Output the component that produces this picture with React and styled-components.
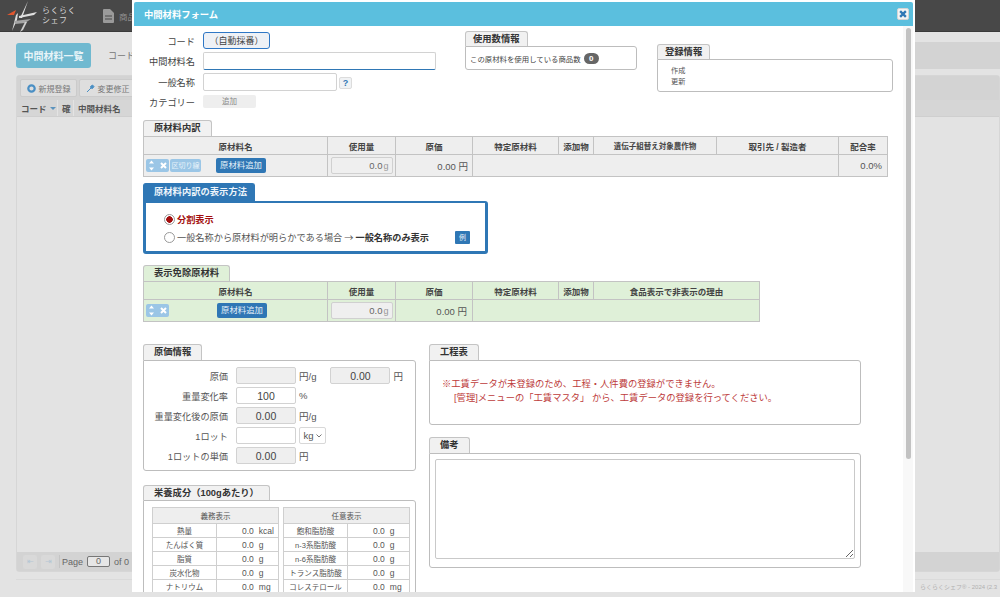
import React from 'react'
import styled, { createGlobalStyle } from 'styled-components'

const GlobalStyle = createGlobalStyle`
  html, body {
    margin: 0;
    padding: 0;
    height: 100%;
    overflow: hidden;
    background: #e3e3e3;
  }

  * {
    box-sizing: border-box;
  }

  body {
    font-family: "Liberation Sans", "Noto Sans CJK JP", sans-serif;
    color: #333;
  }
`

const Page = styled.div`
  width: 1000px;
  height: 597px;
  position: relative;
  overflow: hidden;
`

/* dimmed page behind the modal */
const Header = styled.header`
  height: 32px;
  background: #484848;
  border-bottom: 1px solid #3a3a3a;
  display: flex;
  align-items: center;
  padding-left: 7px;
`

const LogoText = styled.div`
  color: #d6d6d6;
  font-size: 8px;
  line-height: 9.500px;
  margin-left: 3px;
  letter-spacing: 0.5px;
`

const NavItem = styled.div`
  display: flex;
  align-items: center;
  gap: 5px;
  color: #8f8f8f;
  font-size: 8.5px;
  margin-left: 27px;
`

const TitleRow = styled.div`
  display: flex;
  align-items: stretch;
  height: 27px;
  margin: 10px 0 0 16px;
`

const ListTitle = styled.div`
  width: 75px;
  margin: 1px 0;
  background: #70b9d0;
  border-radius: 3px;
  color: #e8f4f8;
  font-size: 10px;
  font-weight: bold;
  display: flex;
  align-items: center;
  justify-content: center;
`

const SearchLabel = styled.div`
  color: #777;
  font-size: 9px;
  margin-left: 17px;
  display: flex;
  align-items: center;
`

const SearchBand = styled.div`
  flex: 1;
  margin-left: 30px;
  background: #d3d3d3;
`

const ListPanel = styled.div`
  margin: 6px 0 0 16px;
  height: 497px;
  background: #e3e3e3;
  border: 1px solid #d6d6d6;
  border-radius: 3px;
  display: flex;
  flex-direction: column;
`

const ListToolbar = styled.div`
  height: 24px;
  background: #d3d3d3;
  display: flex;
  align-items: center;
  gap: 2px;
  padding-left: 3px;
`

const ToolButton = styled.div`
  width: 57px;
  height: 18px;
  flex: none;
  border: 1px solid #cbcbcb;
  border-radius: 2px;
  background: #dedede;
  color: #777;
  font-size: 8px;
  display: flex;
  align-items: center;
  justify-content: center;
  gap: 3px;
`

const ListHead = styled.div`
  height: 17px;
  display: flex;
  background: #d6d6d6;
  border-bottom: 1px solid #cfcfcf;
  font-size: 8.5px;
  font-weight: bold;
  color: #555;
`

const ListHeadCell = styled.div`
  width: ${p => p.$w}px;
  flex: none;
  display: flex;
  align-items: center;
  padding-left: 4px;
  gap: 3px;
  border-right: 1px solid #e3e3e3;
`

const SortCaret = styled.span`
  width: 0;
  height: 0;
  border-left: 3px solid transparent;
  border-right: 3px solid transparent;
  border-top: 3px solid #5c93bd;
`

const Pager = styled.div`
  margin-top: auto;
  height: 19px;
  background: #d3d3d3;
  display: flex;
  align-items: center;
  padding-left: 6px;
  gap: 4px;
  color: #666;
  font-size: 9px;
`

const PagerArrow = styled.div`
  width: 14px;
  height: 14px;
  border-radius: 2px;
  background: #d9d9d9;
  color: #b4c6d4;
  font-size: 8px;
  display: flex;
  align-items: center;
  justify-content: center;
`

const PagerDivider = styled.div`
  width: 1px;
  height: 13px;
  margin-right: -2px;
  background: #c4c4c4;
`

const PagerInput = styled.div`
  width: 23px;
  height: 11px;
  border: 1px solid #777;
  border-radius: 2px;
  background: #e6e6e6;
  text-align: center;
  line-height: 9px;
`

const FooterRule = styled.div`
  height: 1px;
  margin: 7px 0 0 16px;
  background: #dadada;
`

const FooterText = styled.div`
  position: absolute;
  left: 920px;
  top: 582px;
  font-size: 6px;
  color: #b0b0b0;
  white-space: nowrap;
`

/* modal */
const Modal = styled.div`
  position: absolute;
  left: 132px;
  top: 0;
  width: 783px;
  height: 592px;
  background: #fff;
  padding: 2px 2px 0;
  display: flex;
  flex-direction: column;
`

const ModalTitle = styled.div`
  height: 24px;
  flex: none;
  background: #5bbfde;
  border-radius: 2px 2px 0 0;
  color: #fff;
  font-size: 9.300px;
  font-weight: bold;
  display: flex;
  align-items: center;
  justify-content: space-between;
  padding: 0 4px 0 10px;
`

const CloseButton = styled.div`
  width: 12px;
  height: 12px;
  background: #f4f4f4;
  border: 1px solid #d5d5d5;
  border-radius: 2px;
  display: flex;
  align-items: center;
  justify-content: center;
`

const ModalBody = styled.div`
  flex: 1;
  min-height: 0;
  overflow: hidden;
  font-size: 10px;
`

const ScrollTrack = styled.div`
  position: absolute;
  top: 26px;
  right: 2px;
  bottom: 0;
  width: 10px;
  background: #f8f8f8;
`

const ScrollThumb = styled.div`
  width: 5px;
  height: 431px;
  margin: 2px 0 0 3px;
  background: #c2c2c2;
  border-radius: 3px;
`

const Content = styled.div`
  padding: 6px 0 0 9px;
`

const TopRow = styled.div`
  display: flex;
  align-items: flex-start;
  height: 88px;
`

const CodeForm = styled.div`
  width: 293px;
  display: grid;
  grid-template-columns: 52px 1fr;
  column-gap: 8px;
  row-gap: 3px;
  align-items: center;
  margin-right: 29px;
`

const FormLabel = styled.div`
  font-size: 9.200px;
  color: #444;
  text-align: right;
  white-space: nowrap;
`

const CodeBox = styled.div`
  width: 67px;
  height: 17px;
  border: 1px solid #2f77c5;
  border-radius: 3px;
  background: #eef1f6;
  font-size: 9px;
  color: #444;
  display: flex;
  align-items: center;
  justify-content: center;
`

const TextInput = styled.input`
  display: block;
  width: ${p => p.$w}px;
  height: ${p => p.$h || 18}px;
  padding: 0 5px;
  border: 1px solid #d2d2d2;
  border-bottom-color: ${p => (p.$focus ? '#2f77b5' : '#d2d2d2')};
  border-radius: 2px;
  background: ${p => (p.disabled ? '#efefef' : '#fff')};
  font: 10.500px "Liberation Sans", sans-serif;
  color: #444;
  text-align: center;
  outline: none;
`

const InlineRow = styled.div`
  display: flex;
  align-items: center;
  gap: 2px;
`

const HelpButton = styled.div`
  width: 13px;
  height: 12px;
  margin-top: 2px;
  background: #f0f2f4;
  border: 1px solid #dcdcdc;
  border-radius: 2px;
  color: #2f77b5;
  font-size: 9px;
  font-weight: bold;
  text-align: center;
  line-height: 10px;
`

const AddChip = styled.div`
  width: 53px;
  height: 13px;
  margin: 1px 0;
  background: #eee;
  border-radius: 2px;
  color: #888;
  font-size: 7.500px;
  text-align: center;
  line-height: 13px;
`

const Section = styled.section`
  width: ${p => p.$w}px;
  margin: ${p => p.$m || 0};
`

const SectionTab = styled.div`
  width: fit-content;
  height: ${p => p.$h || 16}px;
  padding: 0 ${p => p.$px || 10}px;
  background: ${p => p.$bg || '#f1f1f1'};
  color: ${p => p.$color || '#333'};
  border: 1px solid ${p => p.$border || '#c4c4c4'};
  border-bottom: none;
  border-radius: 3px 3px 0 0;
  font-size: 9.300px;
  font-weight: bold;
  line-height: ${p => (p.$h || 16) - 1}px;
  white-space: nowrap;
`

const SectionBox = styled.div`
  height: ${p => p.$h}px;
  background: #fff;
  border: 1px solid #bdbdbd;
  border-radius: 0 3px 3px 3px;
`

const UsageBox = styled(SectionBox)`
  font-size: 7.400px;
  display: flex;
  align-items: center;
  gap: 3px;
  padding-left: 4px;
  color: #444;
`

const CountBadge = styled.span`
  width: 15px;
  height: 11px;
  border-radius: 6px;
  background: #666;
  color: #fff;
  font-size: 8px;
  font-weight: bold;
  text-align: center;
  line-height: 11px;
`

const RegLine = styled.div`
  font-size: 7.200px;
  line-height: 11px;
  color: #555;
  padding-left: 13px;

  &:first-child {
    padding-top: 5px;
  }
`

const DataTable = styled.table`
  table-layout: fixed;
  border-collapse: collapse;
  width: ${p => p.$w}px;
  background: ${p => p.$bg};
  font-size: 9.500px;
  color: #444;

  th, td {
    border: 1px solid #c3c3c3;
    padding: 0;
  }

  th {
    height: 18px;
    font-size: 8.500px;
    font-weight: bold;
    color: #444;
    text-align: center;
  }

  td {
    height: 22px;
  }
`

const SmallTh = styled.th`
  && {
    font-size: 7.500px;
  }
`

const ActionCell = styled.div`
  display: flex;
  align-items: center;
  padding: 0 2px;
`

const MoveGroup = styled.div`
  height: 13px;
  width: 23px;
  background: #9bc6e6;
  border-radius: 2px;
  display: flex;
  align-items: center;
  justify-content: space-around;
`

const DividerChip = styled.div`
  height: 13px;
  width: 31px;
  margin-left: 1px;
  background: #9bc6e6;
  border-radius: 2px;
  color: #e8f3fa;
  font-size: 7px;
  text-align: center;
  line-height: 13px;
`

const AddButton = styled.div`
  width: 50px;
  height: 15px;
  margin-left: ${p => p.$ml}px;
  background: #2f77b5;
  border-radius: 2px;
  color: #e4eff8;
  font-size: 8.400px;
  text-align: center;
  line-height: 15px;
`

const QtyCell = styled.div`
  display: flex;
  justify-content: center;
`

const QtyBox = styled.div`
  width: 62px;
  height: 17px;
  background: #efefef;
  border: 1px solid #d0d0d0;
  border-radius: 2px;
  font-size: 9.500px;
  color: #666;
  display: flex;
  align-items: center;
  justify-content: flex-end;
  padding-right: 3px;
  gap: 1px;
`

const UnitGlyph = styled.span`
  color: #999;
  font-size: 9px;
`

const NumCell = styled.td`
  && {
    text-align: right;
    padding-right: ${p => p.$pr || 4}px;
    color: #555;
  }
`

const MethodTab = styled(SectionTab)`
  width: 112px;
  padding: 0 0 0 10px;
`

const MethodBox = styled.div`
  width: 345px;
  height: 53px;
  border: 3px solid #2f77b5;
  border-top-width: 2px;
  border-radius: 0 3px 3px 3px;
  padding: 7px 0 0 18px;
  font-size: 9.200px;
`

const RadioRow = styled.div`
  display: flex;
  align-items: center;
  height: 18px;
  color: ${p => (p.$on ? '#a30e0e' : '#555')};
  font-weight: ${p => (p.$on ? 'bold' : 'normal')};
`

const Radio = styled.span`
  flex: none;
  width: 11px;
  height: 11px;
  margin-right: 2px;
  border-radius: 50%;
  border: 1px solid #999;
  background: ${p => (p.$on ? 'radial-gradient(circle, #a30e0e 0 3px, #fff 3.5px)' : '#fff')};
`

const ArrowGlyph = styled.span`
  font-family: "Noto Sans CJK JP", sans-serif;
  margin: 0 2px;
`

const StrongText = styled.b`
  color: #333;
`

const ExampleChip = styled.span`
  width: 15px;
  height: 13px;
  margin-left: auto;
  margin-right: 15px;
  background: #2f77b5;
  border-radius: 1px;
  color: #e4eff8;
  font-size: 7px;
  font-weight: normal;
  text-align: center;
  line-height: 13px;
`

const LowerRow = styled.div`
  display: flex;
  align-items: flex-start;
  margin-top: 22px;
  gap: 13px;
`

const Column = styled.div`
  display: flex;
  flex-direction: column;
`

const CostGrid = styled.div`
  display: grid;
  grid-template-columns: 92px 60px auto;
  row-gap: 3px;
  align-items: center;
  padding-top: 6px;
  font-size: 9.500px;
  color: #555;
`

const CostLabel = styled.span`
  width: 84px;
  text-align: right;
  white-space: nowrap;
  font-size: 9.200px;
`

const UnitGroup = styled.div`
  display: flex;
  align-items: center;
  height: 17px;
  gap: 3px;
  color: #555;
  padding-left: 3px;
`

const SpacedInput = styled(TextInput)`
  margin-left: 11px;
`

const UnitSelect = styled.div`
  width: 27px;
  height: 17px;
  border: 1px solid #d8d8d8;
  border-radius: 2px;
  font-size: 9.500px;
  display: flex;
  align-items: center;
  justify-content: center;
  gap: 2px;
`

const NutritionBox = styled(SectionBox)`
  display: flex;
  gap: 4px;
  padding: 6px 0 0 8px;
`

const NutritionTable = styled.table`
  table-layout: fixed;
  border-collapse: collapse;
  width: 126px;
  height: fit-content;
  font-size: 7.500px;
  color: #555;

  th, td {
    border: 1px solid #cfcfcf;
    padding: 0;
    text-align: center;
    height: 14px;
  }

  th {
    height: 16px;
    background: #eee;
    font-weight: normal;
  }
`

const NutritionValue = styled.td`
  && {
    text-align: left;
    padding-left: 25px;
    font-size: 8.500px;
  }
`

const NutritionUnit = styled.span`
  margin-left: 5px;
`

const WarningText = styled.div`
  padding: 17px 0 0 12px;
  font-size: 9.300px;
  line-height: 13.500px;
  color: #bd3b3b;
`

const WarningIndent = styled.div`
  padding-left: 12px;
`

const NotesArea = styled.textarea`
  display: block;
  width: 420px;
  height: 100px;
  margin: 5px;
  border: 1px solid #c9c9c9;
  border-radius: 2px;
`

const LogoMark = () => (
  <svg width="32" height="32" viewBox="0 0 32 32">
    <path d="M0 15L9 10L7 15Z" fill="#e2572f" />
    <path d="M11 13L9 15L5 31L10 20Z" fill="#dcdcdc" />
    <path d="M21 1L15 18L13 18Z" fill="#e6e6e6" />
    <path d="M12 16L30 12L27 15L12 18Z" fill="#e0e0e0" />
    <path d="M7 21L24 19L18 23L8 24Z" fill="#a5a5a5" />
    <path d="M18 22L13 32L16 30L20 22Z" fill="#d0d0d0" />
  </svg>
)

const DocIcon = () => (
  <svg width="11" height="14" viewBox="0 0 11 14">
    <path d="M0 1a1 1 0 0 1 1-1h6l4 4v9a1 1 0 0 1-1 1H1a1 1 0 0 1-1-1z" fill="#9a9a9a" />
    <path d="M2 7h7M2 10h7" stroke="#484848" strokeWidth="1.2" />
  </svg>
)

const PlusCircle = () => (
  <svg width="9" height="9" viewBox="0 0 9 9">
    <circle cx="4.5" cy="4.5" r="3.2" fill="none" stroke="#4a8fc4" strokeWidth="2.2" />
    <circle cx="4.5" cy="4.5" r="1" fill="#dedede" />
  </svg>
)

const WrenchIcon = () => (
  <svg width="9" height="9" viewBox="0 0 9 9">
    <path d="M1 8l4-4-.5-1.5L6.5 1 8 2.500 6.500 4.500 5 4" fill="#4a8fc4" stroke="#4a8fc4" />
  </svg>
)

const Arrows = () => (
  <svg width="7" height="11" viewBox="0 0 7 11">
    <path d="M3.500 0.500L6 3.500H1zM3.500 10.500L1 7.500H6z" fill="#fff" />
  </svg>
)

const Cross = ({ color = '#fff', size = 7, width = 2 }) => (
  <svg width={size} height={size} viewBox="0 0 7 7">
    <path d="M1 1l5 5M6 1L1 6" stroke={color} strokeWidth={width} />
  </svg>
)

const Chevron = () => (
  <svg width="6" height="4" viewBox="0 0 6 4">
    <path d="M0.500 0.500L3 3l2.500-2.500" fill="none" stroke="#777" />
  </svg>
)

const RowActions = ({ divider, ml }) => (
  <ActionCell>
    <MoveGroup><Arrows /><Cross /></MoveGroup>
    {divider && <DividerChip>区切り線</DividerChip>}
    <AddButton $ml={ml}>原材料追加</AddButton>
  </ActionCell>
)

const Qty = () => (
  <QtyCell>
    <QtyBox>0.0<UnitGlyph>g</UnitGlyph></QtyBox>
  </QtyCell>
)

const requiredRows = [
  ['熱量', '0.0', 'kcal'],
  ['たんぱく質', '0.0', 'g'],
  ['脂質', '0.0', 'g'],
  ['炭水化物', '0.0', 'g'],
  ['ナトリウム', '0.0', 'mg'],
]

const optionalRows = [
  ['飽和脂肪酸', '0.0', 'g'],
  ['n-3系脂肪酸', '0.0', 'g'],
  ['n-6系脂肪酸', '0.0', 'g'],
  ['トランス脂肪酸', '0.0', 'g'],
  ['コレステロール', '0.0', 'mg'],
]

const Nutrition = ({ title, rows }) => (
  <NutritionTable>
    <colgroup>
      <col width="64" />
      <col width="62" />
    </colgroup>
    <thead>
      <tr><th colSpan="2">{title}</th></tr>
    </thead>
    <tbody>
      {rows.map(([name, value, unit]) => (
        <tr key={name}>
          <td>{name}</td>
          <NutritionValue>{value}<NutritionUnit>{unit}</NutritionUnit></NutritionValue>
        </tr>
      ))}
    </tbody>
  </NutritionTable>
)

const App = () => {
  return (
    <Page>
      <GlobalStyle />
      <Header>
        <LogoMark />
        <LogoText>らくらく<br />シェフ</LogoText>
        <NavItem><DocIcon />商品</NavItem>
      </Header>
      <TitleRow>
        <ListTitle>中間材料一覧</ListTitle>
        <SearchLabel>コード</SearchLabel>
        <SearchBand />
      </TitleRow>
      <ListPanel>
        <ListToolbar>
          <ToolButton><PlusCircle />新規登録</ToolButton>
          <ToolButton><WrenchIcon />変更修正</ToolButton>
        </ListToolbar>
        <ListHead>
          <ListHeadCell $w={41}>コード<SortCaret /></ListHeadCell>
          <ListHeadCell $w={16}>確</ListHeadCell>
          <ListHeadCell $w={300}>中間材料名</ListHeadCell>
        </ListHead>
        <Pager>
          <PagerArrow>⇤</PagerArrow>
          <PagerArrow>⇥</PagerArrow>
          <PagerDivider />
          <span>Page</span>
          <PagerInput>0</PagerInput>
          <span>of 0</span>
        </Pager>
      </ListPanel>
      <FooterRule />
      <FooterText>らくらくシェフ® - 2024 (2.3</FooterText>

      <Modal>
        <ModalTitle>
          中間材料フォーム
          <CloseButton><Cross color="#2f77b5" size={8} /></CloseButton>
        </ModalTitle>
        <ModalBody>
          <Content>
            <TopRow>
              <CodeForm>
                <FormLabel>コード</FormLabel>
                <CodeBox>（自動採番）</CodeBox>
                <FormLabel>中間材料名</FormLabel>
                <TextInput $w={233} $focus />
                <FormLabel>一般名称</FormLabel>
                <InlineRow>
                  <TextInput $w={134} />
                  <HelpButton>?</HelpButton>
                </InlineRow>
                <FormLabel>カテゴリー</FormLabel>
                <AddChip>追加</AddChip>
              </CodeForm>
              <Section $w={172} $m="-1px 0 0 0">
                <SectionTab $h={15} $px={7}>使用数情報</SectionTab>
                <UsageBox $h={24}>この原材料を使用している商品数<CountBadge>0</CountBadge></UsageBox>
              </Section>
              <Section $w={236} $m="12px 0 0 20px">
                <SectionTab $h={15} $px={7}>登録情報</SectionTab>
                <SectionBox $h={33}>
                  <RegLine>作成</RegLine>
                  <RegLine>更新</RegLine>
                </SectionBox>
              </Section>
            </TopRow>

            <Section $w={744}>
              <SectionTab>原材料内訳</SectionTab>
              <DataTable $w={744} $bg="#eeeeee">
                <colgroup>
                  <col width="184" /><col width="68" /><col width="77" /><col width="86" />
                  <col width="35" /><col width="123" /><col width="122" /><col width="49" />
                </colgroup>
                <thead>
                  <tr>
                    <th>原材料名</th><th>使用量</th><th>原価</th><th>特定原材料</th>
                    <th>添加物</th><SmallTh>遺伝子組替え対象農作物</SmallTh>
                    <th>取引先 / 製造者</th><th>配合率</th>
                  </tr>
                </thead>
                <tbody>
                  <tr>
                    <td><RowActions divider ml={15} /></td>
                    <td><Qty /></td>
                    <NumCell>0.00 円</NumCell>
                    <td colSpan="4" />
                    <NumCell $pr={5}>0.0%</NumCell>
                  </tr>
                </tbody>
              </DataTable>
            </Section>

            <Section $w={345} $m="6px 0 0 0">
              <MethodTab $h={18} $bg="#2f77b5" $border="#2f77b5" $color="#eef5fb">原材料内訳の表示方法</MethodTab>
              <MethodBox>
                <RadioRow $on><Radio $on />分割表示</RadioRow>
                <RadioRow>
                  <Radio />一般名称から原材料が明らかである場合<ArrowGlyph>→</ArrowGlyph><StrongText>一般名称のみ表示</StrongText>
                  <ExampleChip>例</ExampleChip>
                </RadioRow>
              </MethodBox>
            </Section>

            <Section $w={616} $m="11px 0 0 0">
              <SectionTab $bg="#dff0d8">表示免除原材料</SectionTab>
              <DataTable $w={616} $bg="#dff0d8">
                <colgroup>
                  <col width="184" /><col width="68" /><col width="77" /><col width="86" />
                  <col width="35" /><col width="166" />
                </colgroup>
                <thead>
                  <tr>
                    <th>原材料名</th><th>使用量</th><th>原価</th><th>特定原材料</th>
                    <th>添加物</th><th>食品表示で非表示の理由</th>
                  </tr>
                </thead>
                <tbody>
                  <tr>
                    <td><RowActions ml={48} /></td>
                    <td><Qty /></td>
                    <NumCell $pr={5}>0.00 円</NumCell>
                    <td colSpan="3" />
                  </tr>
                </tbody>
              </DataTable>
            </Section>

            <LowerRow>
              <Column>
                <Section $w={273}>
                  <SectionTab>原価情報</SectionTab>
                  <SectionBox $h={111}>
                    <CostGrid>
                      <CostLabel>原価</CostLabel>
                      <TextInput $w={60} $h={17} disabled />
                      <UnitGroup>円/g<SpacedInput $w={60} $h={17} disabled value="0.00" readOnly />円</UnitGroup>
                      <CostLabel>重量変化率</CostLabel>
                      <TextInput $w={60} $h={17} value="100" readOnly />
                      <UnitGroup>%</UnitGroup>
                      <CostLabel>重量変化後の原価</CostLabel>
                      <TextInput $w={60} $h={17} disabled value="0.00" readOnly />
                      <UnitGroup>円/g</UnitGroup>
                      <CostLabel>1ロット</CostLabel>
                      <TextInput $w={60} $h={17} />
                      <UnitGroup><UnitSelect>kg <Chevron /></UnitSelect></UnitGroup>
                      <CostLabel>1ロットの単価</CostLabel>
                      <TextInput $w={60} $h={17} disabled value="0.00" readOnly />
                      <UnitGroup>円</UnitGroup>
                    </CostGrid>
                  </SectionBox>
                </Section>
                <Section $w={273} $m="14px 0 0 0">
                  <SectionTab $h={15}>栄養成分（100gあたり）</SectionTab>
                  <NutritionBox $h={220}>
                    <Nutrition title="義務表示" rows={requiredRows} />
                    <Nutrition title="任意表示" rows={optionalRows} />
                  </NutritionBox>
                </Section>
              </Column>
              <Column>
                <Section $w={432}>
                  <SectionTab>工程表</SectionTab>
                  <SectionBox $h={65}>
                    <WarningText>
                      ※工賃データが未登録のため、工程・人件費の登録ができません。
                      <WarningIndent>[管理]メニューの「工賃マスタ」 から、工賃データの登録を行ってください。</WarningIndent>
                    </WarningText>
                  </SectionBox>
                </Section>
                <Section $w={432} $m="12px 0 0 0">
                  <SectionTab>備考</SectionTab>
                  <SectionBox $h={115}>
                    <NotesArea />
                  </SectionBox>
                </Section>
              </Column>
            </LowerRow>
          </Content>
        </ModalBody>
        <ScrollTrack><ScrollThumb /></ScrollTrack>
      </Modal>
    </Page>
  )
}

export default App
